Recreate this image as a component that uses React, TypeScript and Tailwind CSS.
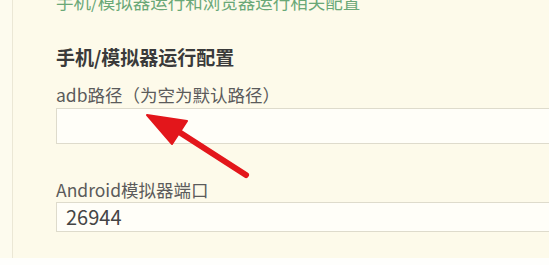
import React from "react";

const font = { fontFamily: '"Noto Sans CJK SC", "Noto Sans", sans-serif' };

function Arrow() {
  return (
    <svg
      className="pointer-events-none absolute left-0 top-0"
      width="549"
      height="265"
      viewBox="0 0 549 265"
    >
      <line x1="176" y1="130" x2="246" y2="175" stroke="#e3161b" strokeWidth="6" strokeLinecap="round" />
      <polygon points="147,115 187,121 172,144" fill="#e3161b" stroke="#e3161b" strokeWidth="2" strokeLinejoin="round" />
    </svg>
  );
}

export default function App() {
  return (
    <div className="relative h-[265px] w-[549px] overflow-hidden bg-[#fefefc]" style={font}>
      <div className="flex h-[258px] overflow-hidden bg-[#fdfaea]">
        <div className="w-[13px] shrink-0 border-r border-[#ebe7d5] bg-[#fdfbee]" />
        <div className="flex flex-col pl-[43px]">
          <div className="-mt-[7px] whitespace-nowrap text-[17.5px] leading-[18px] text-[#6aa877]">
            手机/模拟器运行和浏览器运行相关配置
          </div>
          <div className="mt-[35px] whitespace-nowrap text-[19px] font-bold leading-[22px] text-[#3a3a3a]">
            手机/模拟器运行配置
          </div>
          <div className="mt-[16px] whitespace-nowrap text-[17.5px] leading-[22px] text-[#5b5b5b]">
            adb路径（为空为默认路径）
          </div>
          <div className="mt-[2px] h-[36px] w-[560px] border border-[#dedbcc] bg-[#fffef8]" />
          <div className="mt-[35px] whitespace-nowrap text-[17.5px] leading-[22px] text-[#5b5b5b]">
            Android模拟器端口
          </div>
          <div className="mt-[1px] h-[30px] w-[560px] border border-[#dedbcc] bg-[#fffef8] pl-[9px] text-[20px] leading-[28px] text-[#454545]">
            26944
          </div>
        </div>
      </div>
      <Arrow />
    </div>
  );
}
